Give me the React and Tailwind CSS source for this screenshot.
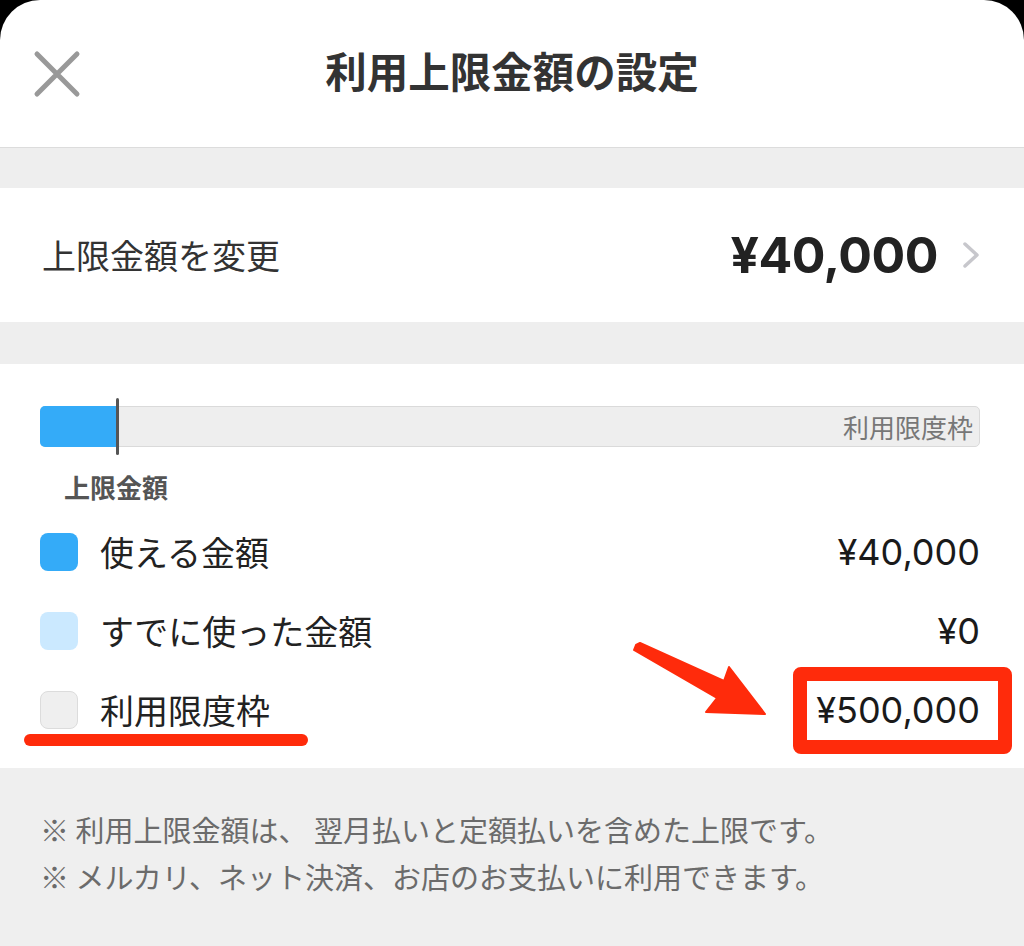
import React from 'react';

const jp = "font-['Noto_Sans_CJK_JP','Noto_Sans',sans-serif]";
const num = "font-['Inter','Noto_Sans_CJK_JP',sans-serif]";

const LegendRow = ({ swatch, label, value }) => (
    <div className="flex h-[79px] items-center justify-between">
        <div className="flex items-center">
            <span className={`h-[38px] w-[38px] rounded-[8px] ${swatch}`} />
            <span className={`ml-[22px] text-[34px] leading-none text-[#222] ${jp}`}>{label}</span>
        </div>
        <span className={`text-[36px] leading-none text-[#1a1a1a] ${num}`}>{value}</span>
    </div>
);

const App = () => {
    return (
        <div className="min-h-[946px] w-full bg-black">
            <div className="flex h-[946px] flex-col overflow-hidden rounded-t-[40px] bg-white">
                {/* header */}
                <div className="grid h-[148px] grid-cols-[1fr_auto_1fr] items-center border-b border-[#dcdcdc] pb-[6px]">
                    <div className="pl-[33px] pt-[6px]">
                        <svg width="48" height="48" viewBox="0 0 48 48" fill="none">
                            <path d="M4 4 L44 44 M44 4 L4 44" stroke="#999" strokeWidth="5" strokeLinecap="round" />
                        </svg>
                    </div>
                    <h1 className={`text-[41.5px] font-bold leading-none text-[#333] ${jp}`}>利用上限金額の設定</h1>
                    <div />
                </div>

                <div className="h-[40px] bg-[#eeeeee]" />

                {/* change limit */}
                <div className="flex h-[134px] items-center justify-between pl-[42px] pr-[44px]">
                    <span className={`text-[34px] leading-none text-[#333] ${jp}`}>上限金額を変更</span>
                    <div className="flex items-center gap-[24px]">
                        <span className={`text-[50px] font-bold leading-none tracking-[-0.5px] text-[#222] ${num}`}>¥40,000</span>
                        <svg width="18" height="26" viewBox="0 0 18 26" fill="none">
                            <path d="M3 2 L15 13 L3 24" stroke="#c7c7cc" strokeWidth="3.5" strokeLinecap="round" strokeLinejoin="round" />
                        </svg>
                    </div>
                </div>

                <div className="h-[42px] bg-[#eeeeee]" />

                {/* usage section */}
                <div className="relative h-[404px] pl-[40px] pr-[44px] pt-[42px]">
                    <div className="relative h-[41px] rounded-[5px] border border-[#dadada] bg-[#eeeeee]">
                        <div className="absolute bottom-[-1px] left-[-1px] top-[-1px] w-[77px] rounded-l-[5px] bg-[#34abf8]" />
                        <div className="absolute left-[75px] top-[-9px] h-[57px] w-[3px] rounded-full bg-[#555]" />
                        <div className="flex h-full items-center justify-end pr-[6px]">
                            <span className={`text-[26px] leading-none text-[#777] ${jp}`}>利用限度枠</span>
                        </div>
                    </div>
                    <div className={`ml-[24px] mt-[27px] text-[26px] font-bold leading-none text-[#555] ${jp}`}>上限金額</div>

                    <div className="mt-[12px]">
                        <LegendRow swatch="bg-[#34abf8]" label="使える金額" value="¥40,000" />
                        <LegendRow swatch="bg-[#cbe9ff]" label="すでに使った金額" value="¥0" />
                        <LegendRow swatch="border border-[#dcdcdc] bg-[#efefef]" label="利用限度枠" value="¥500,000" />
                    </div>

                    {/* annotations */}
                    <div className="pointer-events-none absolute left-[24px] top-[370px] h-[12px] w-[284px] rounded-full bg-[#ff2b0b]" />
                    <div className="pointer-events-none absolute left-[793px] top-[303px] h-[87px] w-[219px] rounded-[8px] border-[14px] border-[#ff2b0b]" />
                    <svg className="pointer-events-none absolute left-[620px] top-[266px]" width="160" height="100" viewBox="0 0 160 100">
                        <polygon
                            points="16,15 20,13 104,51 109,37 145,84 86,82 97,68 14,20"
                            fill="#ff2b0b"
                            stroke="#ff2b0b"
                            strokeWidth="2"
                            strokeLinejoin="round"
                        />
                    </svg>
                </div>

                {/* notes */}
                <div className={`flex-1 bg-[#efefef] pl-[40px] pt-[38px] text-[29px] leading-[47px] text-[#6b6b6b] ${jp}`}>
                    <p>※ 利用上限金額は、 翌月払いと定額払いを含めた上限です。</p>
                    <p>※ メルカリ、ネット決済、お店のお支払いに利用できます。</p>
                </div>
            </div>
        </div>
    );
};

export default App;
